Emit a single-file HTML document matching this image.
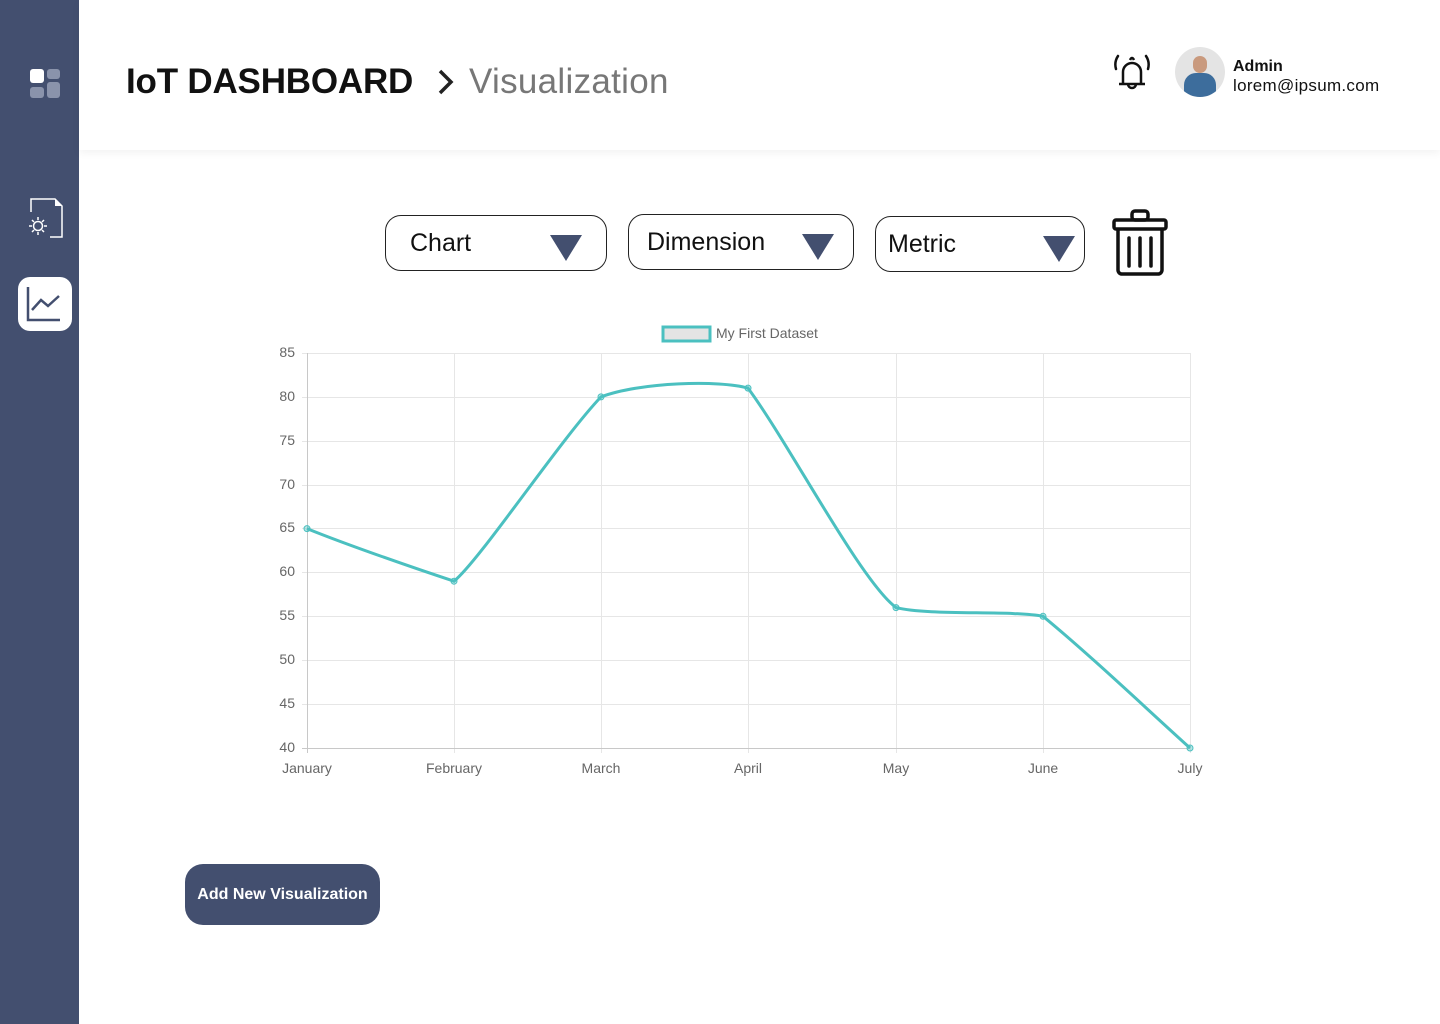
<!DOCTYPE html>
<html><head><meta charset="utf-8"><style>
*{margin:0;padding:0;box-sizing:border-box}
body{width:1440px;height:1024px;background:#fff;font-family:"Liberation Sans",sans-serif;position:relative;overflow:hidden}
.sb{position:absolute;left:0;top:0;width:79px;height:1024px;background:#434f6f}
.hdr{position:absolute;left:79px;top:0;right:0;height:150px;background:#fff;box-shadow:0 3px 8px rgba(0,0,0,0.05)}
.title{position:absolute;left:126px;top:62px;font-size:35px;font-weight:bold;color:#111;letter-spacing:-0.2px}
.sub{position:absolute;left:469px;top:62px;font-size:35px;color:#777;letter-spacing:0.3px}
.dd{position:absolute;border:1px solid #222;border-radius:16px;font-size:25px;color:#111;padding-left:24px;display:flex;align-items:center}
.tri{position:absolute;width:0;height:0;border-left:16px solid transparent;border-right:16px solid transparent;border-top:26px solid #434f6f}
.btn{position:absolute;left:185px;top:864px;width:195px;height:61px;background:#434f6f;border-radius:18px;color:#fff;font-weight:bold;font-size:16px;display:flex;align-items:center;justify-content:center}
</style></head><body>
<div class="sb"></div>
<svg style="position:absolute;left:0;top:0" width="79" height="340">
<rect x="30" y="69" width="14" height="14" rx="3" fill="#fff"/>
<rect x="47" y="69" width="13" height="10" rx="3" fill="#8a93ab"/>
<rect x="30" y="87" width="14" height="11" rx="3" fill="#8a93ab"/>
<rect x="47" y="82" width="13" height="16" rx="3" fill="#8a93ab"/>
<path d="M31 212 V199 H55 L62 206 V237 H50" fill="none" stroke="#fff" stroke-width="1.5"/>
<path d="M55 199 V206 H62 Z" fill="#fff"/>
<circle cx="38" cy="226" r="4.5" fill="none" stroke="#fff" stroke-width="1.5"/>
<path d="M38 217v3M38 232v3M29 226h3M44 226h3M32 220l2 2M42 230l2 2M32 232l2-2M42 222l2-2" stroke="#fff" stroke-width="1.5"/>
<rect x="18" y="277" width="54" height="54" rx="12" fill="#fff"/>
<path d="M28 287 V320 H60" fill="none" stroke="#434f6f" stroke-width="2.5"/>
<path d="M32 310 L41 300 L48 306 L59 296" fill="none" stroke="#434f6f" stroke-width="2.5"/>
</svg>
<div class="hdr"></div>
<div class="title">IoT DASHBOARD</div>
<svg style="position:absolute;left:436px;top:68px" width="20" height="30"><path d="M4 3 L15 14 L4 25" fill="none" stroke="#222" stroke-width="3.5"/></svg>
<div class="sub">Visualization</div>
<svg style="position:absolute;left:1110px;top:50px" width="44" height="44">
<path d="M13 34 V22 a9 9 0 0 1 18 0 V34 M9 34 H35" fill="none" stroke="#111" stroke-width="2.5" stroke-linejoin="round"/>
<path d="M18 34 a4 4 0 0 0 8 0" fill="none" stroke="#111" stroke-width="2.5"/>
<path d="M8 6 Q4 12 6 19 M36 6 Q40 12 38 19" fill="none" stroke="#111" stroke-width="2.5" stroke-linecap="round"/>
<path d="M20 10 Q22 6 24 10" fill="none" stroke="#111" stroke-width="2.5"/>
</svg>
<div style="position:absolute;left:1175px;top:47px;width:50px;height:50px;border-radius:50%;background:#e4e4e4;overflow:hidden">
<div style="position:absolute;left:9px;top:26px;width:32px;height:30px;border-radius:12px 12px 0 0;background:#3d6d9c"></div>
<div style="position:absolute;left:18px;top:9px;width:14px;height:17px;border-radius:7px;background:#c99a7e"></div>
</div>
<div style="position:absolute;left:1233px;top:58px;font-size:16px;font-weight:bold;color:#111">Admin</div>
<div style="position:absolute;left:1233px;top:76px;font-size:17px;color:#111;letter-spacing:0.3px">lorem@ipsum.com</div>
<div class="dd" style="left:385px;top:215px;width:222px;height:56px">Chart<div class="tri" style="left:164px;top:19px"></div></div>
<div class="dd" style="left:628px;top:214px;width:226px;height:56px;padding-left:18px">Dimension<div class="tri" style="left:173px;top:19px"></div></div>
<div class="dd" style="left:875px;top:216px;width:210px;height:56px;padding-left:12px">Metric<div class="tri" style="left:167px;top:19px"></div></div>
<svg style="position:absolute;left:1110px;top:208px" width="60" height="70">
<rect x="22" y="3" width="16" height="9" rx="3" fill="none" stroke="#111" stroke-width="3.5"/>
<rect x="4" y="12" width="52" height="9" rx="2" fill="none" stroke="#111" stroke-width="3.5"/>
<path d="M8 21 V62 a4 4 0 0 0 4 4 H48 a4 4 0 0 0 4-4 V21" fill="none" stroke="#111" stroke-width="3.5"/>
<path d="M19 30V58M30 30V58M41 30V58" stroke="#111" stroke-width="3.5" stroke-linecap="round"/>
</svg>
<svg style="position:absolute;left:0;top:0" width="1440" height="1024" font-family="Liberation Sans, sans-serif">
<rect x="663" y="327" width="47" height="14" fill="#e4e4e4" stroke="#4bc0c0" stroke-width="3"/>
<text x="716" y="338" font-size="14" fill="#666">My First Dataset</text>
<g stroke="#e6e6e6" stroke-width="1">
<path d="M302 353.5H1190M302 397.5H1190M302 441.5H1190M302 485.5H1190M302 528.5H1190M302 572.5H1190M302 616.5H1190M302 660.5H1190M302 704.5H1190"/>
<path d="M454.5 353V753M601.5 353V753M748.5 353V753M896.5 353V753M1043.5 353V753M1190.5 353V753"/>
</g>
<path d="M307.5 353V753M302 748.5H1190" stroke="#c8c8c8"/>
<g font-size="14" fill="#666" text-anchor="end">
<text x="295" y="357">85</text><text x="295" y="401">80</text><text x="295" y="445">75</text><text x="295" y="489">70</text><text x="295" y="532">65</text><text x="295" y="576">60</text><text x="295" y="620">55</text><text x="295" y="664">50</text><text x="295" y="708">45</text><text x="295" y="752">40</text>
</g>
<g font-size="14" fill="#666" text-anchor="middle">
<text x="307" y="773">January</text><text x="454" y="773">February</text><text x="601" y="773">March</text><text x="748" y="773">April</text><text x="896" y="773">May</text><text x="1043" y="773">June</text><text x="1190" y="773">July</text>
</g>
<path d="M307,528.6 C350,546 420,570 454,581.2 C480,560 560,440 601,396.9 C640,382 720,380 748,388.1 C790,445 860,580 896,607.6 C930,616 1010,610 1043,616.3 C1090,655 1150,712 1190,748" fill="none" stroke="#4bc0c0" stroke-width="3"/>
<g fill="rgba(75,192,192,0.4)" stroke="#4bc0c0" stroke-width="1">
<circle cx="307" cy="528.6" r="3"/><circle cx="454" cy="581.2" r="3"/><circle cx="601" cy="396.9" r="3"/><circle cx="748" cy="388.1" r="3"/><circle cx="896" cy="607.6" r="3"/><circle cx="1043" cy="616.3" r="3"/><circle cx="1190" cy="748" r="3"/>
</g>
</svg>
<div class="btn">Add New Visualization</div>
</body></html>
